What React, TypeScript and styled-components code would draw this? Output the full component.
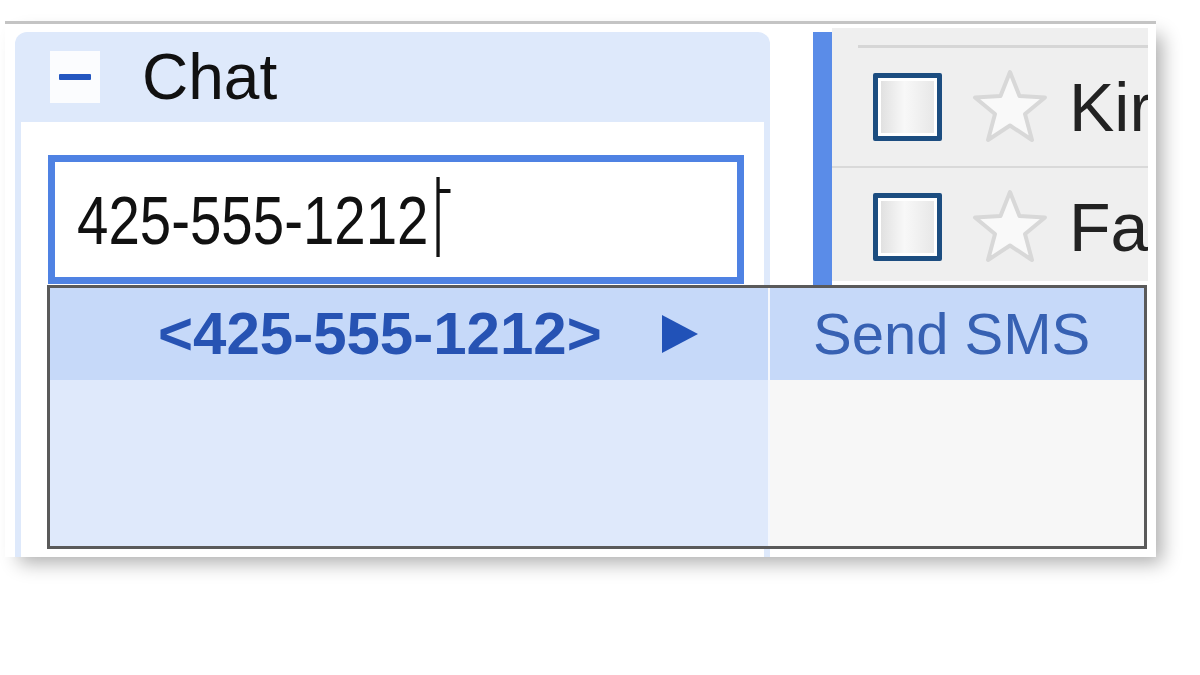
import React from 'react';
import styled, { createGlobalStyle } from 'styled-components';

const Global = createGlobalStyle`
  html, body { margin: 0; padding: 0; background: #ffffff; }
  body {
    font-family: "Liberation Sans", Arial, sans-serif;
    width: 1200px;
    height: 675px;
    overflow: hidden;
  }
`;

const Stage = styled.div`
  padding: 21px 0 0 5px;
`;

const Window = styled.div`
  position: relative;
  box-sizing: border-box;
  width: 1151px;
  height: 536px;
  border-top: 3px solid #c4c4c4;
  background: #ffffff;
  box-shadow: 10px 10px 18px -4px rgba(0, 0, 0, 0.32);
  display: flex;
  align-items: flex-start;
  padding-top: 8px;
`;

const ChatPanel = styled.div`
  box-sizing: border-box;
  margin-left: 10px;
  width: 755px;
  align-self: stretch;
  display: flex;
  flex-direction: column;
  background: #dee9fb;
  border-radius: 12px 12px 0 0;
  padding: 0 6px;
`;

const ChatHeader = styled.div`
  height: 90px;
  display: flex;
  align-items: center;
  padding-left: 29px;
  gap: 42px;
`;

const MinusButton = styled.div`
  width: 50px;
  height: 52px;
  background: #fbfcfe;
  display: flex;
  align-items: center;
  justify-content: center;
  &::before {
    content: "";
    width: 32px;
    height: 6px;
    border-radius: 1px;
    background: #2356c0;
  }
`;

const ChatTitle = styled.span`
  font-size: 64px;
  color: #111111;
  line-height: 1;
`;

const ChatBody = styled.div`
  flex: 1;
  background: #ffffff;
  padding: 33px 20px 0 27px;
`;

const SearchBox = styled.div`
  box-sizing: border-box;
  height: 129px;
  border: 7px solid #4f82e3;
  background: #ffffff;
  display: flex;
  align-items: center;
  padding-left: 22px;
`;

const Typed = styled.div`
  display: inline-flex;
  align-items: center;
  transform: scaleX(0.83);
  transform-origin: left center;
  font-size: 68px;
  color: #111111;
  line-height: 1;
  white-space: nowrap;
`;

const Caret = styled.svg`
  margin-left: 9px;
  margin-top: -6px;
`;

const SelectBar = styled.div`
  margin-left: 43px;
  width: 19px;
  height: 253px;
  background: #5a8ce8;
`;

const ListPanel = styled.div`
  box-sizing: border-box;
  width: 316px;
  height: 253px;
  margin-top: -4px;
  background: #efefef;
  overflow: hidden;
  padding-top: 17px;
`;

const ListTopLine = styled.div`
  margin-left: 26px;
  height: 3px;
  background: #d6d6d6;
`;

const MailRow = styled.div<{ $h: number; $divider?: boolean }>`
  height: ${(p) => p.$h}px;
  display: flex;
  align-items: center;
  padding-left: 41px;
  white-space: nowrap;
  border-bottom: ${(p) => (p.$divider ? '2px solid #d9d9d9' : 'none')};
`;

const CheckBox = styled.div`
  box-sizing: border-box;
  flex: none;
  width: 69px;
  height: 68px;
  border: 5px solid #1c4d80;
  border-radius: 2px;
  box-shadow: inset 0 0 0 3px #ffffff;
  background: linear-gradient(to right, #dedede, #f8f8f8 45%, #e6e6e6);
  margin-right: 30px;
`;

const StarIcon = styled.svg`
  flex: none;
  margin-right: 21px;
`;

const Sender = styled.span`
  font-size: 68px;
  color: #222222;
  line-height: 1;
`;

const Dropdown = styled.div`
  position: absolute;
  left: 42px;
  top: 261px;
  box-sizing: border-box;
  width: 1100px;
  height: 264px;
  border: 3px solid #5a5a5a;
  display: grid;
  grid-template-columns: 718px 2px 1fr;
  background: #ffffff;
`;

const MenuColumn = styled.div<{ $bg: string }>`
  background: ${(p) => p.$bg};
  display: flex;
  flex-direction: column;
`;

const MenuDivider = styled.div`
  background: #f4f7fd;
`;

const MenuItem = styled.div<{ $pad: number }>`
  height: 92px;
  background: #c6d9f9;
  display: flex;
  align-items: center;
  padding-left: ${(p) => p.$pad}px;
  white-space: nowrap;
`;

const Address = styled.span`
  font-size: 60px;
  font-weight: bold;
  color: #2753b3;
  line-height: 1;
`;

const Arrow = styled.svg`
  margin-left: 60px;
`;

const ActionLabel = styled.span`
  font-size: 58px;
  color: #3761b3;
  line-height: 1;
`;

const Star = () => (
  <StarIcon width="76" height="78" viewBox="0 0 76 78">
    <polygon
      points="38,4 47.5,28 73,29.5 53,46 60,72 38,57.5 16,72 23,46 3,29.5 28.5,28"
      fill="#f9f9f9"
      stroke="#d8d8d8"
      strokeWidth="4"
      strokeLinejoin="round"
    />
  </StarIcon>
);

export default function App() {
  return (
    <>
      <Global />
      <Stage>
        <Window>
          <ChatPanel>
            <ChatHeader>
              <MinusButton />
              <ChatTitle>Chat</ChatTitle>
            </ChatHeader>
            <ChatBody>
              <SearchBox>
                <Typed>
                  425-555-1212
                  <Caret width="20" height="80" viewBox="0 0 20 80">
                    <path d="M3 0 V80 M3 14 H18" stroke="#111" strokeWidth="4" fill="none" />
                  </Caret>
                </Typed>
              </SearchBox>
            </ChatBody>
          </ChatPanel>
          <SelectBar />
          <ListPanel>
            <ListTopLine />
            <MailRow $h={118} $divider>
              <CheckBox />
              <Star />
              <Sender>Kir</Sender>
            </MailRow>
            <MailRow $h={117}>
              <CheckBox />
              <Star />
              <Sender>Fa</Sender>
            </MailRow>
          </ListPanel>
          <Dropdown>
            <MenuColumn $bg="#dfe9fb">
              <MenuItem $pad={108}>
                <Address>&lt;425-555-1212&gt;</Address>
                <Arrow width="36" height="38" viewBox="0 0 36 38">
                  <polygon points="0,0 36,19 0,38" fill="#2152b8" />
                </Arrow>
              </MenuItem>
            </MenuColumn>
            <MenuDivider />
            <MenuColumn $bg="#f7f7f7">
              <MenuItem $pad={43}>
                <ActionLabel>Send SMS</ActionLabel>
              </MenuItem>
            </MenuColumn>
          </Dropdown>
        </Window>
      </Stage>
    </>
  );
}
